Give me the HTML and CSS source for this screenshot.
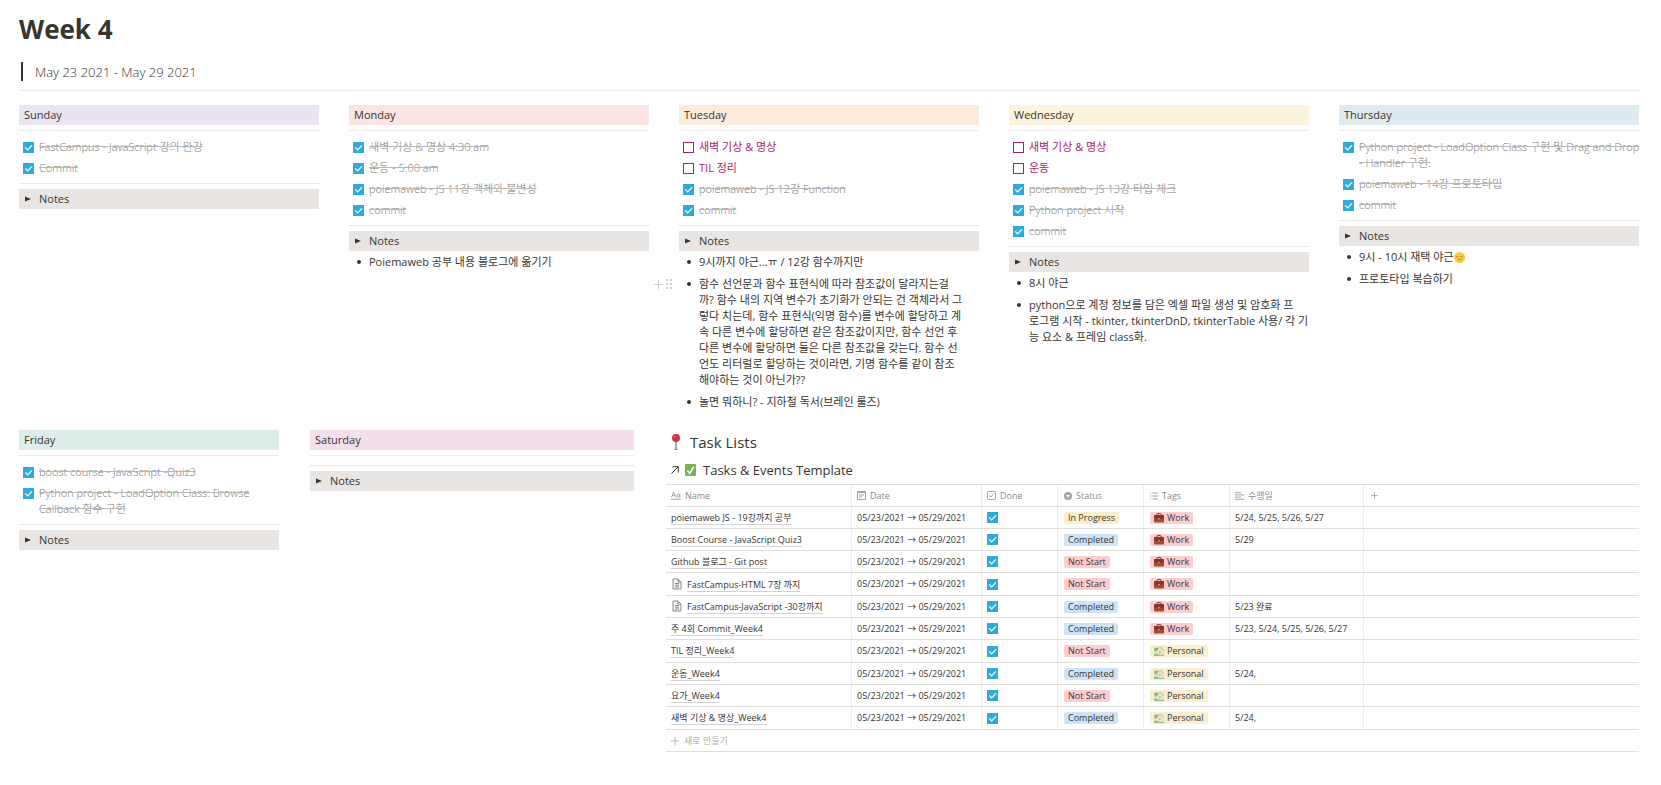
FILE: index.html
```html
<!DOCTYPE html>
<html lang="ko">
<head>
<meta charset="utf-8">
<title>Week 4</title>
<link rel="stylesheet" href="styles.css">
</head>
<body>
<svg class="sprite" aria-hidden="true">
  <symbol id="case" viewBox="0 0 10 10"><path d="M3 2.5V1.2Q3 .6 3.6.6h2.8Q7 .6 7 1.2v1.3" fill="none" stroke="#6e3527" stroke-width="1"/><rect x="0" y="2" width="10" height="7.6" rx="1" fill="#a54c2c"/><path d="M0 3Q0 2 1 2h8q1 0 1 1v2.2Q5 7 0 5.2z" fill="#86382a"/><rect x="4.2" y="5" width="1.6" height="1.2" fill="#d19c80"/></symbol>
  <symbol id="home" viewBox="0 0 10 10"><rect x="0" y="1" width="10" height="9" rx="1" fill="#dfe3cf"/><circle cx="2.3" cy="3.6" r="2.2" fill="#8fb96b"/><path d="M2.6 5.2 6 1.4l3.6 3.4v4.4h-7z" fill="#ece3d2"/><path d="M2.2 5 6 1l3.8 3.8" fill="none" stroke="#b9b5a4" stroke-width=".8"/><rect x="5" y="5.4" width="1.6" height="1.6" fill="#a9b3b5"/><path d="M0 8.2q2-1.2 4 0t6 .4V10H0z" fill="#9cc078"/></symbol>
  <symbol id="page" viewBox="0 0 10 12"><path d="M1 1h5l3 3v7H1z" fill="#f4f4f3" stroke="#8b8b89" stroke-width="1"/><path d="M6 1v3h3M3 5.5h4M3 7.2h4M3 9h4" fill="none" stroke="#8b8b89" stroke-width="1"/></symbol>
  <symbol id="plus" viewBox="0 0 9 9"><path d="M4.5 0v9M0 4.5h9" fill="none" stroke="currentColor" stroke-width="1"/></symbol>
  <symbol id="tri" viewBox="0 0 7 6"><path d="M0 0 7 3 0 6z" fill="currentColor"/></symbol>
</svg>
<main class="page">
  <h1 class="title">Week 4</h1>
  <blockquote class="quote">May 23 2021 - May 29 2021</blockquote>
  <hr class="rule">

  <div class="week">
    <section class="day">
      <h2 class="day-name purple">Sunday</h2>
      <hr class="rule">
      <ul class="todos">
        <li><label class="todo"><input class="check" type="checkbox" checked><span>FastCampus - JavaScript 강의 완강</span></label></li>
        <li><label class="todo"><input class="check" type="checkbox" checked><span>Commit</span></label></li>
      </ul>
      <hr class="rule">
      <button class="notes" type="button"><svg class="tri"><use href="#tri"/></svg>Notes</button>
    </section>

    <section class="day">
      <h2 class="day-name red">Monday</h2>
      <hr class="rule">
      <ul class="todos">
        <li><label class="todo"><input class="check" type="checkbox" checked><span>새벽 기상 &amp; 명상 4:30 am</span></label></li>
        <li><label class="todo"><input class="check" type="checkbox" checked><span>운동 - 5:00 am</span></label></li>
        <li><label class="todo"><input class="check" type="checkbox" checked><span>poiemaweb - JS 11강 객체와 불변성</span></label></li>
        <li><label class="todo"><input class="check" type="checkbox" checked><span>commit</span></label></li>
      </ul>
      <hr class="rule">
      <button class="notes" type="button"><svg class="tri"><use href="#tri"/></svg>Notes</button>
      <ul class="bullets">
        <li>Poiemaweb 공부 내용 블로그에 옮기기</li>
      </ul>
    </section>

    <section class="day">
      <h2 class="day-name orange">Tuesday</h2>
      <hr class="rule">
      <ul class="todos">
        <li><label class="todo"><input class="check" type="checkbox"><span>새벽 기상 &amp; 명상</span></label></li>
        <li><label class="todo"><input class="check" type="checkbox"><span>TIL 정리</span></label></li>
        <li><label class="todo"><input class="check" type="checkbox" checked><span>poiemaweb - JS 12강 Function</span></label></li>
        <li><label class="todo"><input class="check" type="checkbox" checked><span>commit</span></label></li>
      </ul>
      <hr class="rule">
      <button class="notes" type="button"><svg class="tri"><use href="#tri"/></svg>Notes</button>
      <ul class="bullets">
        <li>9시까지 야근...ㅠ / 12강 함수까지만</li>
        <li>
          <div class="handle">
            <button type="button" aria-label="블록 추가"><svg width="9" height="9"><use href="#plus"/></svg></button>
            <button type="button" aria-label="블록 이동"><svg width="6" height="10" viewBox="0 0 6 10" fill="currentColor"><path d="M0 0h2v2H0zM4 0h2v2H4zM0 4h2v2H0zM4 4h2v2H4zM0 8h2v2H0zM4 8h2v2H4z"/></svg></button>
          </div>
          함수 선언문과 함수 표현식에 따라 참조값이 달라지는걸<br>까? 함수 내의 지역 변수가 초기화가 안되는 건 객체라서 그<br>렇다 치는데, 함수 표현식(익명 함수)를 변수에 할당하고 계<br>속 다른 변수에 할당하면 같은 참조값이지만, 함수 선언 후<br>다른 변수에 할당하면 둘은 다른 참조값을 갖는다. 함수 선<br>언도 리터럴로 할당하는 것이라면, 기명 함수를 같이 참조<br>해야하는 것이 아닌가??
        </li>
        <li>놀면 뭐하니? - 지하철 독서(브레인 룰즈)</li>
      </ul>
    </section>

    <section class="day">
      <h2 class="day-name yellow">Wednesday</h2>
      <hr class="rule">
      <ul class="todos">
        <li><label class="todo"><input class="check" type="checkbox"><span>새벽 기상 &amp; 명상</span></label></li>
        <li><label class="todo"><input class="check" type="checkbox"><span>운동</span></label></li>
        <li><label class="todo"><input class="check" type="checkbox" checked><span>poiemaweb - JS 13강 타입 체크</span></label></li>
        <li><label class="todo"><input class="check" type="checkbox" checked><span>Python project 시작</span></label></li>
        <li><label class="todo"><input class="check" type="checkbox" checked><span>commit</span></label></li>
      </ul>
      <hr class="rule">
      <button class="notes" type="button"><svg class="tri"><use href="#tri"/></svg>Notes</button>
      <ul class="bullets">
        <li>8시 야근</li>
        <li>python으로 계정 정보를 담은 엑셀 파일 생성 및 암호화 프<br>로그램 시작 - tkinter, tkinterDnD, tkinterTable 사용/ 각 기<br>능 요소 &amp; 프레임 class화.</li>
      </ul>
    </section>

    <section class="day">
      <h2 class="day-name blue">Thursday</h2>
      <hr class="rule">
      <ul class="todos">
        <li><label class="todo"><input class="check" type="checkbox" checked><span>Python project - LoadOption Class 구현 및 Drag and Drop<br>- Handler 구현.</span></label></li>
        <li><label class="todo"><input class="check" type="checkbox" checked><span>poiemaweb - 14강 프로토타입</span></label></li>
        <li><label class="todo"><input class="check" type="checkbox" checked><span>commit</span></label></li>
      </ul>
      <hr class="rule">
      <button class="notes" type="button"><svg class="tri"><use href="#tri"/></svg>Notes</button>
      <ul class="bullets">
        <li>9시 - 10시 재택 야근<svg class="face" viewBox="0 0 11 11"><circle cx="5.5" cy="5.5" r="5.5" fill="#fcc93c"/><path d="M2 4.8h2.6M6.4 4.8H9M3.4 7.4h4.2" stroke="#c08a28" stroke-width="1"/></svg></li>
        <li>프로토타입 복습하기</li>
      </ul>
    </section>
  </div>

  <div class="weekend">
    <section class="day">
      <h2 class="day-name green">Friday</h2>
      <hr class="rule">
      <ul class="todos">
        <li><label class="todo"><input class="check" type="checkbox" checked><span>boost course - JavaScript -Quiz3</span></label></li>
        <li><label class="todo"><input class="check" type="checkbox" checked><span>Python project - LoadOption Class: Browse<br>Callback 함수 구현</span></label></li>
      </ul>
      <hr class="rule">
      <button class="notes" type="button"><svg class="tri"><use href="#tri"/></svg>Notes</button>
    </section>

    <section class="day">
      <h2 class="day-name pink">Saturday</h2>
      <hr class="rule">
      <ul class="todos empty"></ul>
      <hr class="rule">
      <button class="notes" type="button"><svg class="tri"><use href="#tri"/></svg>Notes</button>
    </section>

    <section class="tasks">
      <h2 class="tasks-title"><svg class="pin" viewBox="0 0 10 16"><path d="M5 7v8" stroke="#8299a6" stroke-width="1.6"/><path d="M3 15.4h4" stroke="#8d9499" stroke-width="1"/><circle cx="5" cy="4" r="4" fill="#dc2c40"/><circle cx="3.8" cy="2.8" r="1" fill="#ea6572"/></svg>Task Lists</h2>
      <h3 class="tasks-sub"><svg class="arrow" viewBox="0 0 8 8"><path d="M.5 7.5 7 1M1.5.7h5.8v5.8" fill="none" stroke="#37352f" stroke-width="1"/></svg><svg class="tick" viewBox="0 0 11 12"><rect width="11" height="12" rx="1" fill="#77b255"/><path d="M2.4 6.4 4.8 9.4 8.8 2.6" fill="none" stroke="#fff" stroke-width="1.6"/></svg>Tasks &amp; Events Template</h3>
      <table class="table">
        <colgroup><col class="c-name"><col class="c-date"><col class="c-done"><col class="c-tag"><col class="c-tag"><col class="c-days"><col></colgroup>
        <thead>
          <tr>
            <th><span class="head"><svg width="10" height="9" viewBox="0 0 10 9" fill="none" stroke="currentColor"><path d="M.5 6.2 2.6 1l2.1 5.2M1.2 4.4h2.8M8.8 3v3.3M0 8.2h10"/><circle cx="7.3" cy="4.6" r="1.5"/></svg>Name</span></th>
            <th><span class="head"><svg width="9" height="9" viewBox="0 0 9 9" fill="none" stroke="currentColor"><path d="M.5.5h8v8h-8z"/><path d="M0 1.5h9M2 4h5M2 6h3"/></svg>Date</span></th>
            <th><span class="head"><svg width="9" height="9" viewBox="0 0 9 9" fill="none" stroke="currentColor"><rect x=".5" y=".5" width="8" height="8" rx="1"/><path d="M2.4 4.4 4 6l2.8-3.4"/></svg>Done</span></th>
            <th><span class="head"><svg width="8" height="8" viewBox="0 0 8 8"><circle cx="4" cy="4" r="4" fill="currentColor"/><path d="M2 3h4L4 5.8z" fill="#fff"/></svg>Status</span></th>
            <th><span class="head"><svg width="8" height="8" viewBox="0 0 8 8" fill="none" stroke="currentColor"><path d="M0 1h1.2M0 4h1.2M0 7h1.2M2.4 1H8M2.4 4H8M2.4 7H8"/></svg>Tags</span></th>
            <th><span class="head"><svg width="9" height="8" viewBox="0 0 9 8" fill="none" stroke="currentColor"><path d="M0 .7h6M0 2.9h9M0 5.1h6M0 7.3h9"/></svg>수행일</span></th>
            <th><button class="add-col" type="button" aria-label="속성 추가"><svg width="7" height="7"><use href="#plus"/></svg></button></th>
          </tr>
        </thead>
        <tbody>
          <tr><td><a class="name" href="#">poiemaweb JS - 19강까지 공부</a></td><td>05/23/2021 → 05/29/2021</td><td><input class="check" type="checkbox" checked aria-label="Done"></td><td><span class="tag t-yellow">In Progress</span></td><td><span class="tag t-red"><svg><use href="#case"/></svg>Work</span></td><td>5/24, 5/25, 5/26, 5/27</td><td></td></tr>
          <tr><td><a class="name" href="#">Boost Course - JavaScript Quiz3</a></td><td>05/23/2021 → 05/29/2021</td><td><input class="check" type="checkbox" checked aria-label="Done"></td><td><span class="tag t-blue">Completed</span></td><td><span class="tag t-red"><svg><use href="#case"/></svg>Work</span></td><td>5/29</td><td></td></tr>
          <tr><td><a class="name" href="#">Github 블로그 - Git post</a></td><td>05/23/2021 → 05/29/2021</td><td><input class="check" type="checkbox" checked aria-label="Done"></td><td><span class="tag t-red">Not Start</span></td><td><span class="tag t-red"><svg><use href="#case"/></svg>Work</span></td><td></td><td></td></tr>
          <tr><td><svg class="doc"><use href="#page"/></svg><a class="name" href="#">FastCampus-HTML 7장 까지</a></td><td>05/23/2021 → 05/29/2021</td><td><input class="check" type="checkbox" checked aria-label="Done"></td><td><span class="tag t-red">Not Start</span></td><td><span class="tag t-red"><svg><use href="#case"/></svg>Work</span></td><td></td><td></td></tr>
          <tr><td><svg class="doc"><use href="#page"/></svg><a class="name" href="#">FastCampus-JavaScript -30강까지</a></td><td>05/23/2021 → 05/29/2021</td><td><input class="check" type="checkbox" checked aria-label="Done"></td><td><span class="tag t-blue">Completed</span></td><td><span class="tag t-red"><svg><use href="#case"/></svg>Work</span></td><td>5/23 완료</td><td></td></tr>
          <tr><td><a class="name" href="#">주 4회 Commit_Week4</a></td><td>05/23/2021 → 05/29/2021</td><td><input class="check" type="checkbox" checked aria-label="Done"></td><td><span class="tag t-blue">Completed</span></td><td><span class="tag t-red"><svg><use href="#case"/></svg>Work</span></td><td>5/23, 5/24, 5/25, 5/26, 5/27</td><td></td></tr>
          <tr><td><a class="name" href="#">TIL 정리_Week4</a></td><td>05/23/2021 → 05/29/2021</td><td><input class="check" type="checkbox" checked aria-label="Done"></td><td><span class="tag t-red">Not Start</span></td><td><span class="tag t-yellow"><svg><use href="#home"/></svg>Personal</span></td><td></td><td></td></tr>
          <tr><td><a class="name" href="#">운동_Week4</a></td><td>05/23/2021 → 05/29/2021</td><td><input class="check" type="checkbox" checked aria-label="Done"></td><td><span class="tag t-blue">Completed</span></td><td><span class="tag t-yellow"><svg><use href="#home"/></svg>Personal</span></td><td>5/24,</td><td></td></tr>
          <tr><td><a class="name" href="#">요가_Week4</a></td><td>05/23/2021 → 05/29/2021</td><td><input class="check" type="checkbox" checked aria-label="Done"></td><td><span class="tag t-red">Not Start</span></td><td><span class="tag t-yellow"><svg><use href="#home"/></svg>Personal</span></td><td></td><td></td></tr>
          <tr><td><a class="name" href="#">새벽 기상 &amp; 명상_Week4</a></td><td>05/23/2021 → 05/29/2021</td><td><input class="check" type="checkbox" checked aria-label="Done"></td><td><span class="tag t-blue">Completed</span></td><td><span class="tag t-yellow"><svg><use href="#home"/></svg>Personal</span></td><td>5/24,</td><td></td></tr>
        </tbody>
      </table>
      <button class="new-row" type="button"><svg width="8" height="8"><use href="#plus"/></svg>새로 만들기</button>
    </section>
  </div>
</main>
</body>
</html>
```
FILE: styles.css
```css
* { box-sizing: border-box; }

body {
  margin: 0;
  background: #fff;
  color: #37352f;
  font: 11px/16px "Open Sans", "Noto Sans", "Noto Sans CJK KR", sans-serif;
}

h1, h2, h3, ul, blockquote { margin: 0; padding: 0; }
ul { list-style: none; }
button { margin: 0; padding: 0; border: 0; background: none; color: inherit; font: inherit; cursor: pointer; }
svg { flex: none; display: block; }
.sprite { position: absolute; width: 0; height: 0; }

.page { padding: 9px 22px 24px 19px; }
.title { font-size: 26px; line-height: 40px; font-weight: 700; }
.quote {
  margin: 13px 0 9px 2px;
  padding: 1px 0 0 12px;
  border-left: 2px solid #37352f;
  font-size: 13px;
  line-height: 18px;
  font-weight: 300;
}
.rule { height: 1px; margin: 0; border: 0; background: #ebebea; }

.week {
  display: grid;
  grid-template-columns: repeat(5, minmax(0, 1fr));
  gap: 30px;
  margin-top: 14px;
}
.weekend {
  display: grid;
  grid-template-columns: minmax(0, 260fr) minmax(0, 324fr) minmax(0, 974fr);
  gap: 31px;
  margin-top: 17px;
}

.day-name {
  margin-bottom: 5px;
  padding: 0 5px;
  font-size: 11px;
  line-height: 20px;
  font-weight: 400;
}
.purple { background: #eae4f2; }
.red { background: #fbe4e4; }
.orange { background: #faebdd; }
.yellow { background: #fbf3db; }
.blue { background: #ddebf1; }
.green { background: #ddedea; }
.pink { background: #f4dfeb; }

.todos { padding: 8px 0 4px 4px; }
.todos.empty { padding-bottom: 1px; }
.todos li { padding-bottom: 5px; white-space: nowrap; }
.todos li:last-child { padding-bottom: 3px; }
.todo { display: flex; gap: 5px; color: #ad1a72; }
.todo:has(:checked) { color: #7c7b78; font-weight: 300; }
.todo :checked + span { text-decoration: line-through #b9b8b6; }
.todo .check { margin-top: 3px; }

.check {
  appearance: none;
  flex: none;
  display: block;
  width: 11px;
  height: 11px;
  margin: 0;
  border: 1px solid #ad1a72;
}
.check:checked {
  border: 0;
  background: #2eaadc url("data:image/svg+xml,%3Csvg xmlns='http://www.w3.org/2000/svg' viewBox='0 0 11 11'%3E%3Cpath d='M2.2 5.4 4.6 7.8 9 3.3' fill='none' stroke='%23fff' stroke-width='1.2'/%3E%3C/svg%3E");
}

.notes {
  display: flex;
  align-items: center;
  gap: 8px;
  width: 100%;
  height: 20px;
  margin-top: 5px;
  padding-left: 6px;
  background: #e9e5e3;
}
.tri { width: 6px; height: 6px; }

.bullets li {
  position: relative;
  padding: 3px 0 3px 20px;
  white-space: nowrap;
}
.bullets li::before {
  content: "";
  position: absolute;
  left: 8px;
  top: 9px;
  width: 4px;
  height: 4px;
  border-radius: 50%;
  background: #37352f;
}
.handle {
  position: absolute;
  left: -25px;
  top: 6px;
  display: flex;
  gap: 3px;
  color: #cfcecc;
}
.face { display: inline-block; width: 11px; height: 11px; vertical-align: -2px; }

.tasks { margin-left: 1px; }
.tasks-title {
  display: flex;
  align-items: center;
  gap: 9px;
  padding-left: 5px;
  font-size: 15px;
  line-height: 24px;
  font-weight: 400;
}
.pin { width: 10px; height: 16px; }
.tasks-sub {
  display: flex;
  align-items: center;
  margin: 6px 0 4px;
  padding-left: 5px;
  font-size: 13px;
  line-height: 20px;
  font-weight: 400;
}
.arrow { width: 8px; height: 8px; margin-right: 6px; }
.tick { width: 11px; height: 12px; margin-right: 7px; }

.table {
  width: 100%;
  table-layout: fixed;
  border-collapse: separate;
  border-spacing: 0;
  border-top: 1px solid #dfdfde;
  font-size: 9px;
  line-height: 12px;
}
.c-name { width: 186px; }
.c-date { width: 130px; }
.c-done { width: 76px; }
.c-tag { width: 86px; }
.c-days { width: 134px; }
.table th, .table td {
  height: 22px;
  padding: 0 5px;
  border-right: 1px solid #ececeb;
  border-bottom: 1px solid #dfdfde;
  text-align: left;
  vertical-align: middle;
  white-space: nowrap;
  font-weight: 400;
}
.table tr > :last-child { border-right: 0; }
.table tbody tr:nth-child(3n+4) td { height: 23px; }
.table tr > :nth-child(4), .table tr > :nth-child(5) { padding-left: 6px; }
.head { display: flex; align-items: center; gap: 4px; color: #8d8c89; }
.head svg { color: #a5a4a1; }
.add-col { display: block; padding-left: 2px; color: #a5a4a1; }
.name { color: inherit; text-decoration: none; border-bottom: 1px solid #d5d4d2; }
.doc { display: inline-block; width: 10px; height: 12px; margin: 0 5px 0 1px; vertical-align: -2px; }

.tag {
  display: inline-flex;
  align-items: center;
  gap: 3px;
  padding: 0 4px;
  border-radius: 2px;
  vertical-align: middle;
}
.tag svg { width: 10px; height: 10px; }
.t-yellow { background: #fbeecc; }
.t-blue { background: #cce4f9; }
.t-red { background: #ffccd1; }

.new-row {
  display: flex;
  align-items: center;
  gap: 5px;
  width: 100%;
  height: 22px;
  padding-left: 5px;
  border-bottom: 1px solid #dfdfde;
  color: #b0afad;
  font-size: 9px;
}
```
